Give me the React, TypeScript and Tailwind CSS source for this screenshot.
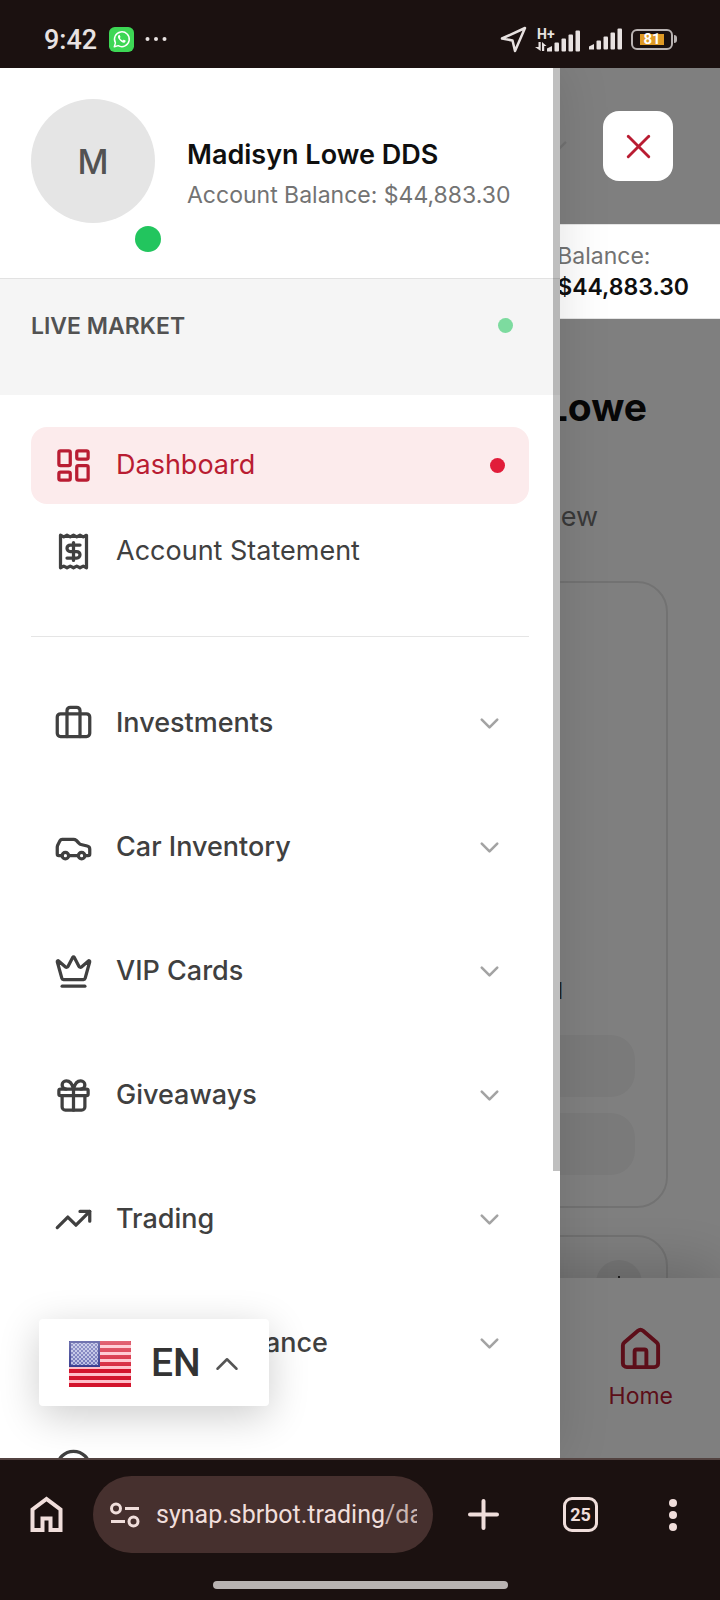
import {useState} from "react";
import {
    Briefcase, Car, ChevronDown, ChevronUp, Circle, Crown, Gift, House,
    LayoutDashboard, Receipt, TrendingUp, HandCoins, X,
} from "lucide-react";
import type {LucideIcon} from "lucide-react";

type MenuGroup = {
    label: string
    icon: LucideIcon
}

const links: MenuGroup[] = [
    {label: "Dashboard", icon: LayoutDashboard},
    {label: "Account Statement", icon: Receipt},
]

const groups: MenuGroup[] = [
    {label: "Investments", icon: Briefcase},
    {label: "Car Inventory", icon: Car},
    {label: "VIP Cards", icon: Crown},
    {label: "Giveaways", icon: Gift},
    {label: "Trading", icon: TrendingUp},
    {label: "Loans & Finance", icon: HandCoins},
]

const SignalBars = () => (
    <svg width="34" height="22" viewBox="0 0 34 22" fill="#e8e2e1">
        <path d="M0 21.500V18.500L5 16V21.500Z"/>
        <rect x="7.500" y="12.500" width="4.500" height="9" rx="1"/>
        <rect x="14.500" y="8.500" width="4.500" height="13" rx="1"/>
        <rect x="21.500" y="4.500" width="4.500" height="17" rx="1"/>
        <rect x="28.500" y="0.500" width="4.500" height="21" rx="1"/>
    </svg>
)

const StatusBar = () => (
    <div className="flex h-[68px] shrink-0 items-center justify-between bg-[#1b1110] pt-[10px] pr-[43px] pl-11 font-[Roboto,sans-serif] text-[#e8e2e1]">
        <div className="flex items-center">
            <span className="pt-0.5 text-[27px] font-medium leading-8">9:42</span>
            <svg className="ml-3" width="25" height="25" viewBox="0 0 26 26" fill="none">
                <rect width="26" height="26" rx="6" fill="#3dd755"/>
                <path d="M5.500 20.500l1.200-4A7.700 7.700 0 1 1 9.600 19.400z" stroke="#fff" strokeWidth="1.500" strokeLinejoin="round"/>
                <path d="M10 8.500c-1 .8-.9 2.500.6 4.500 1.700 2.300 4.200 3.900 5.700 3.100 1-.6 1.300-1.700.8-2l-1.600-.9c-.7-.2-.9.9-1.500.8-1-.3-2.300-1.500-2.700-2.500-.1-.5.8-.8.600-1.400l-.7-1.600c-.3-.5-.9-.3-1.200 0z" fill="#fff"/>
            </svg>
            <svg className="ml-[11px]" width="22" height="6" viewBox="0 0 22 6" fill="#e8e2e1">
                <circle cx="2.500" cy="3" r="2"/>
                <circle cx="11" cy="3" r="2"/>
                <circle cx="19.500" cy="3" r="2"/>
            </svg>
        </div>
        <div className="flex items-center">
            <svg width="27" height="27" viewBox="0 0 27 27" fill="none" stroke="#e8e2e1" strokeWidth="2.500" strokeLinejoin="round">
                <path d="M25 2L15 25L12.500 14.500L2 12.500Z"/>
            </svg>
            <div className="ml-2 flex items-end">
                <div className="flex w-3 flex-col items-start">
                    <span className="pl-0.5 text-[14px] font-bold leading-[14px]">H+</span>
                    <svg width="12" height="11" viewBox="0 0 12 11" fill="#e8e2e1">
                        <path d="M3.500 1h2.200v9L0 6h3.500zM7 10V1l4.500 4H9.200v5z"/>
                    </svg>
                </div>
                <SignalBars/>
            </div>
            <div className="ml-2">
                <SignalBars/>
            </div>
            <div className="ml-2 flex items-center">
                <div className="flex h-[21px] w-[42px] items-center justify-center rounded-md border-2 border-[#b9b3b2]">
                    <span className="w-6 bg-[#e09a25] text-center text-[15px] font-bold leading-[11px] text-white">81</span>
                </div>
                <span className="ml-px h-2 w-[3px] rounded-r bg-[#b9b3b2]"></span>
            </div>
        </div>
    </div>
)

const Flag = () => (
    <svg width="62" height="47" viewBox="0 0 62 47">
        <pattern id="stars" width="4" height="4" patternUnits="userSpaceOnUse">
            <rect width="2" height="2" fill="#b4b8e0"/>
            <rect x="2" y="2" width="2" height="2" fill="#b4b8e0"/>
        </pattern>
        <linearGradient id="gloss" x1="0" y1="0" x2="0" y2="1">
            <stop offset="0" stopColor="#fff" stopOpacity="0.35"/>
            <stop offset="0.550" stopColor="#fff" stopOpacity="0.1"/>
            <stop offset="0.600" stopColor="#fff" stopOpacity="0"/>
        </linearGradient>
        <rect y="1" width="62" height="46" rx="1" fill="#ffbec8"/>
        {[0, 1, 2, 3, 4, 5, 6].map((i) => (
            <rect key={i} y={1 + i * 7} width="62" height="4" fill="#d3142c"/>
        ))}
        <rect y="1" width="31" height="26" fill="#262b86"/>
        <rect x="2" y="3" width="27" height="22" fill="#6165b0"/>
        <rect x="2" y="3" width="27" height="22" fill="url(#stars)"/>
        <rect y="1" width="62" height="46" rx="1" fill="url(#gloss)"/>
    </svg>
)

type DrawerProps = {
    active: string
    setActive: (active: string) => void
}

const Drawer = ({active, setActive}: DrawerProps) => (
    <aside className="absolute inset-y-0 left-0 z-30 w-7/9 overflow-hidden bg-white shadow-[0_0_50px_rgba(0,0,0,0.12)]">
        <div className="flex h-[211px] items-start border-b border-[#e2e2e2] px-[31px] pt-[31px]">
            <div className="relative flex size-[124px] shrink-0 items-center justify-center rounded-full bg-[#e5e5e5] text-[34px] font-medium text-[#525252]">
                M
                <span className="absolute -right-[6px] -bottom-[29px] size-[26px] rounded-full bg-[#22c55e]"></span>
            </div>
            <div className="ml-8 pt-9">
                <h2 className="text-[27px] font-semibold leading-10 text-[#0f0f0f]">Madisyn Lowe DDS</h2>
                <p className="text-[23px] leading-10 whitespace-nowrap text-[#737373]">Account Balance: $44,883.30</p>
            </div>
        </div>
        <div className="flex h-[116px] items-start justify-between bg-[#f5f5f5] pt-[31px] pr-[47px] pl-[31px]">
            <h3 className="text-[23px] font-semibold leading-8 text-[#525252]">LIVE MARKET</h3>
            <span className="mt-2 size-[15px] rounded-full bg-[#7ddb9f]"></span>
        </div>
        <nav className="px-[31px] pt-8">
            <div className="flex flex-col gap-[9px] border-b border-[#e5e5e5] pb-[46px]">
                {links.map(({label, icon: Icon}) => (
                    <a
                        key={label}
                        href="#"
                        onClick={() => setActive(label)}
                        className={`flex h-[77px] items-center rounded-2xl pr-6 pl-[23px] text-[27px] ${active === label ? "bg-[#fcebec] text-[#b91c32]" : "text-[#404040]"}`}
                    >
                        <Icon size={39}/>
                        <span className="ml-[23px] flex-1">{label}</span>
                        {active === label && <span className="size-[15px] rounded-full bg-[#e11d3a]"></span>}
                    </a>
                ))}
            </div>
            <div className="flex flex-col gap-[47px] pt-12">
                {groups.map(({label, icon: Icon}) => (
                    <button
                        key={label}
                        type="button"
                        className="flex h-[77px] items-center pr-6 pl-[23px] text-left text-[27px] font-medium text-[#404040]"
                    >
                        <Icon size={39}/>
                        <span className="ml-[23px] flex-1">{label}</span>
                        <ChevronDown size={31} className="text-[#a3a3a3]"/>
                    </button>
                ))}
                <button type="button" aria-label="More" className="flex h-[77px] items-center pr-6 pl-[23px] text-[#404040]">
                    <Circle size={39}/>
                </button>
            </div>
        </nav>
        <div className="absolute top-0 right-0 h-[1103px] w-[7px] bg-black/25"></div>
    </aside>
)

const Page = () => (
    <div className="flex h-full flex-col bg-white">
        <header className="flex h-[156px] shrink-0 items-center justify-end pr-[47px]">
            <ChevronDown size={31} className="mr-[30px] text-[#e5e5e5]"/>
            <button
                type="button"
                aria-label="Close menu"
                className="relative z-20 flex size-[70px] items-center justify-center rounded-2xl bg-white text-[#b91c32]"
            >
                <X size={41} strokeWidth={1.700}/>
            </button>
        </header>
        <div className="relative z-20 flex h-[95px] shrink-0 justify-end border-y border-[#e5e5e5] bg-white pt-4 pr-[31px]">
            <div className="text-[23px] leading-[31px]">
                <p className="text-[#737373]">Balance:</p>
                <p className="font-semibold text-[#0f0f0f]">$44,883.30</p>
            </div>
        </div>
        <div className="min-h-0 flex-1 overflow-hidden px-[52px] pt-16 text-right">
            <h1 className="pr-[21px] text-[39px] font-bold leading-[47px] text-[#0f0f0f]">Madisyn Lowe</h1>
            <p className="pt-[67px] pr-[70px] text-[27px] leading-[39px] text-[#737373]">Account overview</p>
            <div className="mt-[45px] flex h-[627px] flex-col justify-end gap-4 rounded-[31px] border-2 border-[#e5e5e5] p-[31px]">
                <p className="pr-[72px] pb-3 text-[23px] leading-8 text-[#404040]">Total</p>
                <div className="h-[62px] rounded-3xl bg-[#f5f5f5]"></div>
                <div className="h-[62px] rounded-3xl bg-[#f5f5f5]"></div>
            </div>
            <div className="mt-[27px] flex h-[200px] justify-end rounded-[31px] border-2 border-[#e5e5e5] pt-[23px] pr-6">
                <div className="flex size-[46px] justify-center rounded-full bg-[#f0f0f0] pt-4">
                    <span className="h-4 w-0.5 bg-[#404040]"></span>
                </div>
            </div>
        </div>
        <nav className="flex h-[180px] shrink-0 justify-end bg-white pt-12 pr-[47px] shadow-[0_-10px_60px_rgba(0,0,0,0.2)]">
            <a href="#" className="flex flex-col items-center text-[23px] leading-[31px] text-[#b91c32]">
                <House size={47}/>
                <span className="mt-2">Home</span>
            </a>
        </nav>
    </div>
)

const BrowserBar = () => (
    <footer className="flex h-[142px] shrink-0 flex-col items-center border-t-2 border-[#534341] bg-[#1b1110] font-[Roboto,sans-serif] text-[#f0dedb]">
        <div className="flex w-full items-center pt-4 pr-[33px] pl-[30px]">
            <button type="button" aria-label="Home page">
                <svg width="33" height="37" viewBox="0 0 33 37" fill="none" stroke="currentColor" strokeWidth="4">
                    <path d="M2.500 34V13.500L16.500 3L30.500 13.500V34H20.500V22.500H12.500V34Z"/>
                </svg>
            </button>
            <div className="ml-[30px] flex h-[77px] min-w-0 flex-1 items-center rounded-full bg-[#46302e] pr-4 pl-[17px]">
                <svg className="shrink-0" width="30" height="26" viewBox="0 0 30 26" fill="none" stroke="currentColor" strokeWidth="3">
                    <circle cx="6" cy="6.500" r="4.500"/>
                    <path d="M15 6.500H29M1 19.500H15"/>
                    <circle cx="23.500" cy="19.500" r="4.500"/>
                </svg>
                <div className="ml-4 flex-1 overflow-hidden text-[25px] leading-9 whitespace-nowrap">
                    synap.sbrbot.trading<span className="text-[#c9b5b1]">/dashboard</span>
                </div>
            </div>
            <button type="button" aria-label="New tab" className="ml-[35px]">
                <svg width="31" height="31" viewBox="0 0 31 31" stroke="currentColor" strokeWidth="4" strokeLinecap="round">
                    <path d="M15.500 2V29M2 15.500H29"/>
                </svg>
            </button>
            <button
                type="button"
                className="ml-16 flex size-[35px] items-center justify-center rounded-[9px] border-[3px] border-[#f0dedb] text-[18px] font-bold"
            >
                25
            </button>
            <button type="button" aria-label="Menu" className="ml-[61px] flex w-7 justify-center">
                <svg width="8" height="32" viewBox="0 0 8 32" fill="currentColor">
                    <circle cx="4" cy="4" r="4"/>
                    <circle cx="4" cy="16" r="4"/>
                    <circle cx="4" cy="28" r="4"/>
                </svg>
            </button>
        </div>
        <div className="mt-7 h-2 w-[295px] rounded-full bg-[#b9b3b2]"></div>
    </footer>
)

const App = () => {
    const [active, setActive] = useState("Dashboard")

    return (
        <div className="flex h-screen flex-col overflow-hidden font-[Inter,sans-serif]">
            <StatusBar/>
            <main className="relative min-h-0 flex-1 overflow-hidden">
                <Page/>
                <div className="absolute inset-0 z-10 bg-black/50"></div>
                <Drawer active={active} setActive={setActive}/>
                <button
                    type="button"
                    className="absolute bottom-[52px] left-[39px] z-40 flex h-[87px] w-[230px] items-center rounded bg-white pt-0.5 pl-[30px] font-[Roboto,sans-serif] text-[39px] font-medium text-[#333333] shadow-[0_10px_40px_rgba(0,0,0,0.2)]"
                >
                    <Flag/>
                    <span className="ml-5">EN</span>
                    <ChevronUp size={38} strokeWidth={1.600} className="ml-[7px] text-[#555555]"/>
                </button>
            </main>
            <BrowserBar/>
        </div>
    );
};

export default App;
